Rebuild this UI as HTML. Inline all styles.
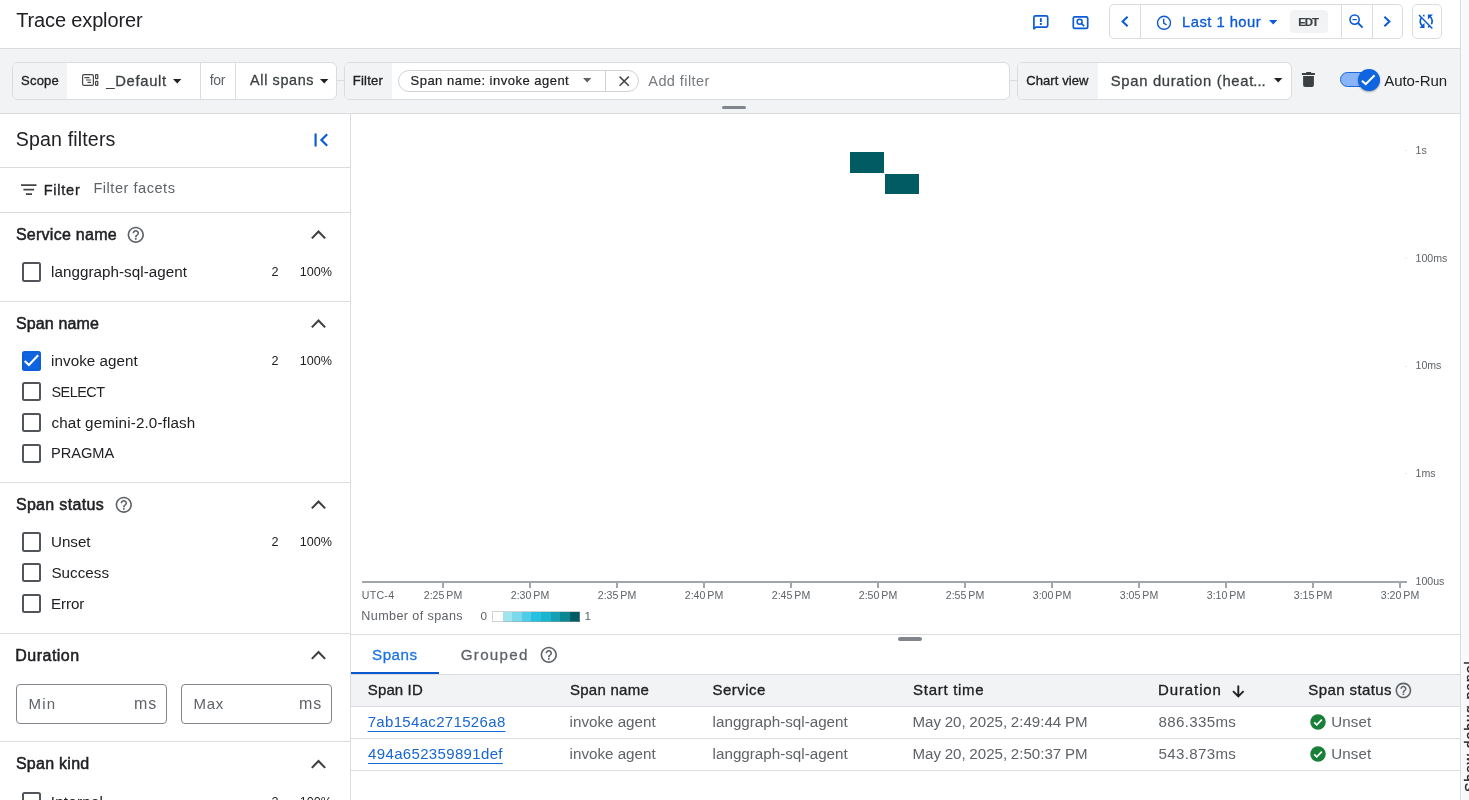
<!DOCTYPE html>
<html lang="en">
<head>
<meta charset="utf-8">
<title>Trace explorer</title>
<style>
*{box-sizing:border-box;margin:0;padding:0}
html,body{width:1469px;height:800px;overflow:hidden;background:#fff}
body{font-family:"Liberation Sans",sans-serif;color:#202124;position:relative}
.abs{position:absolute}
.t{position:absolute;white-space:pre;line-height:1}
.hl{position:absolute;height:1px;background:#dadce0}
.vl{position:absolute;width:1px;background:#dadce0}
.m{-webkit-text-stroke:0.5px currentColor}
.m2{-webkit-text-stroke:0.32px currentColor}
.s1{-webkit-text-stroke:0.28px currentColor}
.m3{-webkit-text-stroke:0.2px currentColor}
.blue{color:#0b5bd5}
.g{color:#5f6368}
.ax{color:#5f6368}
.tc{color:#5f6368}
.lk{color:#1967d2}
.d{color:#3c4043}
svg{position:absolute;overflow:visible}
.cb{position:absolute;width:18.6px;height:19.4px;border:2px solid #51555b;border-radius:2.5px;background:#fff}
.cb.on{background:#0e65df;border-color:#0b5fd8}
</style>
</head>
<body>
<div id="app" style="position:absolute;left:0;top:0;width:1469px;height:800px;will-change:transform">
<!-- header -->
<div class="hl" style="left:0px;top:48px;width:1460px"></div>
<div class="t " style="left:16.20px;top:10px;font-size:20px;letter-spacing:-0.14px;">Trace explorer</div>
<svg style="left:1033px;top:15px" width="16" height="15" viewBox="0 0 16 15"><path d="M0.9 13.8V2.4Q0.9 0.9 2.4 0.9H13.2Q14.7 0.9 14.7 2.4V10.6Q14.7 12.1 13.2 12.1H3Z" fill="none" stroke="#0b5bd5" stroke-width="1.7" stroke-linejoin="round"/><rect x="6.9" y="3.2" width="1.9" height="3.8" fill="#0b5bd5"/><rect x="6.9" y="8" width="1.9" height="1.9" fill="#0b5bd5"/></svg>
<svg style="left:1072px;top:16px" width="17" height="13" viewBox="0 0 17 13"><rect x="1.3" y="0.9" width="14.4" height="11.4" rx="1.4" fill="none" stroke="#0b5bd5" stroke-width="1.7"/><circle cx="7.6" cy="5.8" r="2.5" fill="none" stroke="#0b5bd5" stroke-width="1.5"/><path d="M9.4 7.6L12.2 10.2" stroke="#0b5bd5" stroke-width="1.6"/></svg>
<div class="abs" style="left:1109px;top:4px;width:294px;height:35px;border:1px solid #dadce0;border-radius:5px;background:#fff"></div>
<div class="vl" style="left:1140px;top:5px;height:33px"></div>
<div class="vl" style="left:1341px;top:5px;height:33px"></div>
<div class="vl" style="left:1372px;top:5px;height:33px"></div>
<svg style="left:1121px;top:16px" width="8" height="11" viewBox="0 0 8 11"><path d="M6.6 0.8L1.6 5.5L6.6 10.2" fill="none" stroke="#0b5bd5" stroke-width="2"/></svg>
<svg style="left:1156px;top:15px" width="16" height="16" viewBox="0 0 16 16"><circle cx="8" cy="7.8" r="6.5" fill="none" stroke="#0b5bd5" stroke-width="1.4"/><path d="M7.7 3.8V8L10.6 9.8" fill="none" stroke="#0b5bd5" stroke-width="1.4"/></svg>
<div class="t blue m2" style="left:1182.12px;top:15px;font-size:14.8px;letter-spacing:0.45px;">Last 1 hour</div>
<svg style="left:1269.40px;top:20.10px" width="8.4" height="4.4" viewBox="0 0 8.4 4.4"><path d="M0 0h8.4L4.2 4.4z" fill="#0b5bd5"/></svg>
<div class="abs" style="left:1290px;top:10px;width:38px;height:23px;border-radius:4px;background:#f1f3f4"></div>
<div class="t m3" style="left:1298.36px;top:17px;font-size:11.4px;letter-spacing:-1.12px;color:#3c4043;font-weight:700">EDT</div>
<svg style="left:1348px;top:13px" width="16" height="16" viewBox="0 0 16 16"><circle cx="6.6" cy="6.6" r="4.6" fill="none" stroke="#0b5bd5" stroke-width="1.6"/><path d="M10 10L14.6 14.6" stroke="#0b5bd5" stroke-width="1.8"/><path d="M4.4 6.6h4.4" stroke="#0b5bd5" stroke-width="1.2"/></svg>
<svg style="left:1383.2px;top:16px" width="8" height="11" viewBox="0 0 8 11"><path d="M1.4 0.8L6.4 5.5L1.4 10.2" fill="none" stroke="#0b5bd5" stroke-width="2"/></svg>
<div class="abs" style="left:1412px;top:4px;width:30px;height:35px;border:1px solid #dadce0;border-radius:5px;background:#fff"></div>
<svg style="left:1415.80px;top:11.00px" width="20.4" height="20.4" viewBox="0 0 24 24"><path d="M10 6.35V4.26c-.8.21-1.55.54-2.23.96l1.46 1.46c.25-.12.5-.24.77-.33zm-7.14-.94l2.36 2.36C4.45 8.99 4 10.44 4 12c0 2.21.91 4.2 2.36 5.64L4 20h6v-6l-2.24 2.24C6.68 15.15 6 13.66 6 12c0-1 .25-1.94.68-2.77l8.08 8.08c-.25.13-.5.25-.77.34v2.09c.8-.21 1.55-.54 2.23-.96l2.36 2.36 1.27-1.27L4.14 4.14 2.86 5.41zM20 4h-6v6l2.24-2.24C17.32 8.85 18 10.34 18 12c0 1-.25 1.94-.68 2.77l1.46 1.46C19.55 15.01 20 13.56 20 12c0-2.21-.91-4.2-2.36-5.64L20 4z" fill="#0b5bd5"/></svg>
<!-- toolbar -->
<div class="abs" style="left:0px;top:49px;width:1460px;height:64px;background:#f1f3f4"></div>
<div class="hl" style="left:0px;top:113px;width:1460px"></div>
<div class="abs" style="left:12px;top:62px;width:325px;height:38px;border:1px solid #dadce0;border-radius:6px;background:#fff;overflow:hidden">
  <div class="abs" style="left:0;top:0;width:54px;height:36px;background:#f1f3f4"></div>
  <div class="abs" style="left:187px;top:0;width:1px;height:36px;background:#dadce0"></div>
  <div class="abs" style="left:222px;top:0;width:1px;height:36px;background:#dadce0"></div>
</div>
<div class="t m2" style="left:21.11px;top:74px;font-size:13px;letter-spacing:0.19px;">Scope</div>
<svg style="left:82px;top:74px" width="17" height="12" viewBox="0 0 17 12" fill="none" stroke="#444746" stroke-width="1.2">
  <rect x="0.6" y="0.6" width="10.8" height="10.8" rx="1.5"/>
  <path d="M2.5 3.6h5M4 6h5M5.5 8.4h3.5" stroke-width="1.1"/>
  <rect x="13.6" y="0.6" width="2.2" height="4" rx="0.6"/>
  <rect x="13.6" y="7.4" width="2.2" height="4" rx="0.6"/>
</svg>
<div class="t d s1" style="left:106.32px;top:74px;font-size:14.8px;letter-spacing:0.67px;">_Default</div>
<svg style="left:172.80px;top:78.60px" width="8.4" height="4.4" viewBox="0 0 8.4 4.4"><path d="M0 0h8.4L4.2 4.4z" fill="#202124"/></svg>
<div class="t g" style="left:209.66px;top:73px;font-size:14px;letter-spacing:-0.27px;">for</div>
<div class="t d s1" style="left:250.10px;top:73px;font-size:14.4px;letter-spacing:0.62px;">All spans</div>
<svg style="left:319.50px;top:78.60px" width="8.4" height="4.4" viewBox="0 0 8.4 4.4"><path d="M0 0h8.4L4.2 4.4z" fill="#202124"/></svg>
<div class="hl" style="left:337px;top:80px;width:8px"></div>
<div class="abs" style="left:344px;top:62px;width:666px;height:38px;border:1px solid #dadce0;border-radius:6px;background:#fff;overflow:hidden">
  <div class="abs" style="left:0;top:0;width:47px;height:36px;background:#f1f3f4"></div>
</div>
<div class="t m2" style="left:352.76px;top:74px;font-size:13px;letter-spacing:0.26px;">Filter</div>
<div class="abs" style="left:398px;top:70px;width:241px;height:22px;border:1px solid #d0d3d7;border-radius:11px;background:#fff"></div>
<div class="vl" style="left:605px;top:71px;height:20px;background:#d0d3d7"></div>
<div class="t m3" style="left:410.52px;top:74px;font-size:13px;letter-spacing:0.49px;">Span name: invoke agent</div>
<svg style="left:583.40px;top:78.40px" width="8.4" height="4.4" viewBox="0 0 8.4 4.4"><path d="M0 0h8.4L4.2 4.4z" fill="#5f6368"/></svg>
<svg style="left:619.3px;top:75.5px" width="10.4" height="10.4" viewBox="0 0 10.4 10.4"><path d="M0.6 0.6l9.2 9.2M9.8 0.6l-9.2 9.2" stroke="#444746" stroke-width="1.5" fill="none"/></svg>
<div class="t " style="left:648.30px;top:74px;font-size:14.5px;letter-spacing:0.42px;color:#757a7f">Add filter</div>
<div class="abs" style="left:722px;top:106px;width:24.4px;height:3.4px;border-radius:2px;background:#80868b"></div>
<div class="hl" style="left:1010px;top:80px;width:8px"></div>
<div class="abs" style="left:1017px;top:62px;width:275px;height:38px;border:1px solid #dadce0;border-radius:6px;background:#fff;overflow:hidden">
  <div class="abs" style="left:0;top:0;width:80px;height:36px;background:#f1f3f4"></div>
</div>
<div class="t m2" style="left:1026.15px;top:74px;font-size:13px;letter-spacing:0.10px;">Chart view</div>
<div class="t d s1" style="left:1110.73px;top:74px;font-size:14.8px;letter-spacing:0.70px">Span duration (heat<span style="letter-spacing:0.05px;margin-left:-0.77px">...</span></div>
<svg style="left:1274.00px;top:78.30px" width="8.4" height="4.4" viewBox="0 0 8.4 4.4"><path d="M0 0h8.4L4.2 4.4z" fill="#202124"/></svg>
<svg style="left:1301px;top:71px" width="15" height="17" viewBox="0 0 15 17"><path d="M0.9 1.9h4.3V1h4.9v0.9h3.8v2.2H0.9z M2.1 5.05h10.8v8.9a2 2 0 0 1-2 2H4.1a2 2 0 0 1-2-2z" fill="#3c4043"/></svg>
<div class="abs" style="left:1340px;top:72px;width:39px;height:14.5px;border-radius:7.5px;background:#8ab4f8;border:1.2px solid #1a66dd"></div>
<div class="abs" style="left:1358px;top:68.8px;width:21.8px;height:21.8px;border-radius:11px;background:#0e65df;box-shadow:0 1px 2px rgba(0,0,0,.35)"></div>
<svg style="left:1358px;top:69px" width="22" height="22" viewBox="0 0 22 22"><path d="M3.9 11.7L7.7 15.1L16.6 6.2" stroke="#fff" stroke-width="2" fill="none"/></svg>
<div class="t " style="left:1384.30px;top:73px;font-size:15px;letter-spacing:-0.07px;">Auto-Run</div>
<!-- sidebar -->
<div class="vl" style="left:350px;top:114px;height:686px"></div>
<div class="t " style="left:15.72px;top:130px;font-size:19.6px;letter-spacing:0.15px;">Span filters</div>
<svg style="left:308.30px;top:127.40px" width="26" height="26" viewBox="0 0 24 24"><path d="M18.41 16.59L13.82 12l4.59-4.59L17 6l-6 6 6 6zM6 6h2v12H6z" fill="#0b5bd5"/></svg>
<div class="hl" style="left:0px;top:167px;width:350px"></div>
<svg style="left:21px;top:184px" width="16" height="11" viewBox="0 0 16 11"><path d="M0 1.1h15.5M2.4 5.7h10.7M4.9 10.2h6.1" stroke="#444746" stroke-width="1.7" fill="none"/></svg>
<div class="t m2" style="left:43.73px;top:183px;font-size:14.6px;letter-spacing:0.72px;">Filter</div>
<div class="t g" style="left:93.43px;top:181px;font-size:14.6px;letter-spacing:0.51px;">Filter facets</div>
<div class="hl" style="left:0px;top:212px;width:350px"></div>
<div class="t m" style="left:15.88px;top:227px;font-size:16px;letter-spacing:0.27px;">Service name</div>
<svg style="left:0;top:0" width="1" height="1"><path d="M311.84 238.36L318.5 231.50L325.16 238.36" stroke="#3c4043" stroke-width="2.1" fill="none"/></svg>
<svg style="left:126.00px;top:225.00px" width="19.6" height="19.6" viewBox="0 0 24 24"><path d="M11 18h2v-2h-2v2zm1-16C6.48 2 2 6.48 2 12s4.48 10 10 10 10-4.48 10-10S17.52 2 12 2zm0 18c-4.41 0-8-3.59-8-8s3.59-8 8-8 8 3.59 8 8-3.59 8-8 8zm0-14c-2.21 0-4 1.79-4 4h2c0-1.1.9-2 2-2s2 .9 2 2c0 2-3 1.75-3 5h2c0-2.25 3-2.5 3-5 0-2.21-1.79-4-4-4z" fill="#5f6368"/></svg>
<div class="cb" style="left:22.2px;top:262.30px"></div>
<div class="t " style="left:51.11px;top:264px;font-size:15.2px;letter-spacing:0.04px;">langgraph-sql-agent</div>
<div class="t " style="left:271.57px;top:266px;font-size:12.6px;">2</div>
<div class="t " style="left:299.66px;top:266px;font-size:12.6px;">100%</div>
<div class="hl" style="left:0px;top:301px;width:350px"></div>
<div class="t m" style="left:15.88px;top:316px;font-size:16px;letter-spacing:0.15px;">Span name</div>
<svg style="left:0;top:0" width="1" height="1"><path d="M311.84 327.36L318.5 320.50L325.16 327.36" stroke="#3c4043" stroke-width="2.1" fill="none"/></svg>
<div class="cb on" style="left:22.2px;top:351.30px"></div>
<svg style="left:22.2px;top:351.30px" width="18.6" height="19.4" viewBox="0 0 18.6 19.4"><path d="M2.7 10l4.2 4.1L16.2 4.3" stroke="#fff" stroke-width="2.1" fill="none"/></svg>
<div class="t " style="left:51.11px;top:353px;font-size:15.2px;letter-spacing:0.05px;">invoke agent</div>
<div class="t " style="left:271.57px;top:355px;font-size:12.6px;">2</div>
<div class="t " style="left:299.66px;top:355px;font-size:12.6px;">100%</div>
<div class="cb" style="left:22.2px;top:382.05px"></div>
<div class="t " style="left:51.45px;top:385px;font-size:14.4px;letter-spacing:-0.48px;">SELECT</div>
<div class="cb" style="left:22.2px;top:413.10px"></div>
<div class="t " style="left:51.49px;top:415px;font-size:15.2px;letter-spacing:0.14px;">chat gemini-2.0-flash</div>
<div class="cb" style="left:22.2px;top:443.70px"></div>
<div class="t " style="left:50.93px;top:446px;font-size:14.6px;letter-spacing:-0.01px;">PRAGMA</div>
<div class="hl" style="left:0px;top:482px;width:350px"></div>
<div class="t m" style="left:15.88px;top:497px;font-size:16px;letter-spacing:0.33px;">Span status</div>
<svg style="left:0;top:0" width="1" height="1"><path d="M311.84 508.36L318.5 501.50L325.16 508.36" stroke="#3c4043" stroke-width="2.1" fill="none"/></svg>
<svg style="left:113.70px;top:495.00px" width="19.6" height="19.6" viewBox="0 0 24 24"><path d="M11 18h2v-2h-2v2zm1-16C6.48 2 2 6.48 2 12s4.48 10 10 10 10-4.48 10-10S17.52 2 12 2zm0 18c-4.41 0-8-3.59-8-8s3.59-8 8-8 8 3.59 8 8-3.59 8-8 8zm0-14c-2.21 0-4 1.79-4 4h2c0-1.1.9-2 2-2s2 .9 2 2c0 2-3 1.75-3 5h2c0-2.25 3-2.5 3-5 0-2.21-1.79-4-4-4z" fill="#5f6368"/></svg>
<div class="cb" style="left:22.2px;top:532.30px"></div>
<div class="t " style="left:50.96px;top:534px;font-size:15.2px;letter-spacing:-0.01px;">Unset</div>
<div class="t " style="left:271.57px;top:536px;font-size:12.6px;">2</div>
<div class="t " style="left:299.66px;top:536px;font-size:12.6px;">100%</div>
<div class="cb" style="left:22.2px;top:563.05px"></div>
<div class="t " style="left:51.42px;top:565px;font-size:15.2px;letter-spacing:0.03px;">Success</div>
<div class="cb" style="left:22.2px;top:594.10px"></div>
<div class="t " style="left:50.88px;top:596px;font-size:15.2px;letter-spacing:-0.07px;">Error</div>
<div class="hl" style="left:0px;top:633px;width:350px"></div>
<div class="t m" style="left:15.32px;top:648px;font-size:16px;letter-spacing:0.48px;">Duration</div>
<svg style="left:0;top:0" width="1" height="1"><path d="M311.84 658.86L318.5 652.00L325.16 658.86" stroke="#3c4043" stroke-width="2.1" fill="none"/></svg>
<div class="abs" style="left:16px;top:684px;width:151px;height:40px;border:1px solid #80868b;border-radius:4px"></div>
<div class="abs" style="left:181px;top:684px;width:151px;height:40px;border:1px solid #80868b;border-radius:4px"></div>
<div class="t g" style="left:28.50px;top:696px;font-size:15px;letter-spacing:1.23px;">Min</div>
<div class="t g" style="left:133.96px;top:696px;font-size:16px;letter-spacing:0.94px;">ms</div>
<div class="t g" style="left:193.40px;top:696px;font-size:15px;letter-spacing:0.75px;">Max</div>
<div class="t g" style="left:298.96px;top:696px;font-size:16px;letter-spacing:0.94px;">ms</div>
<div class="hl" style="left:0px;top:741px;width:350px"></div>
<div class="t m" style="left:15.88px;top:756px;font-size:16px;letter-spacing:0.27px;">Span kind</div>
<svg style="left:0;top:0" width="1" height="1"><path d="M311.84 767.86L318.5 761.00L325.16 767.86" stroke="#3c4043" stroke-width="2.1" fill="none"/></svg>
<div class="cb" style="left:22.2px;top:792.30px"></div>
<div class="t " style="left:50.73px;top:794px;font-size:15.2px;letter-spacing:0.22px;">Internal</div>
<div class="t " style="left:271.57px;top:796px;font-size:12.6px;">2</div>
<div class="t " style="left:299.66px;top:796px;font-size:12.6px;">100%</div>
<!-- right strip -->
<div class="abs" style="left:1460px;top:0px;width:9px;height:800px;background:#f8f9fa;border-left:1px solid #dadce0"></div>
<div class="t m2" style="left:1463.3px;top:791.63px;font-size:14px;letter-spacing:0.97px;transform-origin:0 0;transform:rotate(-90deg)">Show debug panel</div>
<!-- chart -->
<div class="abs" style="left:850px;top:152px;width:34px;height:20.5px;background:#005b62"></div>
<div class="abs" style="left:885px;top:173.5px;width:34px;height:20px;background:#005b62"></div>
<div class="t ax" style="left:1415.5px;top:145px;font-size:10.6px;">1s</div>
<div class="abs" style="left:1405px;top:150px;width:2px;height:1px;background:#e8eaed"></div>
<div class="t ax" style="left:1415.5px;top:253px;font-size:10.6px;">100ms</div>
<div class="abs" style="left:1405px;top:258px;width:2px;height:1px;background:#e8eaed"></div>
<div class="t ax" style="left:1415.5px;top:360px;font-size:10.6px;">10ms</div>
<div class="abs" style="left:1405px;top:365.5px;width:2px;height:1px;background:#e8eaed"></div>
<div class="t ax" style="left:1415.5px;top:468px;font-size:10.6px;">1ms</div>
<div class="abs" style="left:1405px;top:473px;width:2px;height:1px;background:#e8eaed"></div>
<div class="t ax" style="left:1415.5px;top:576px;font-size:10.6px;">100us</div>
<div class="abs" style="left:362px;top:581px;width:1045px;height:2px;background:#a1a6ac"></div>
<div class="abs" style="left:442px;top:583px;width:1.5px;height:5px;background:#a1a6ac"></div>
<div class="t ax" style="left:403px;width:80px;text-align:center;top:590px;font-size:10.6px;word-spacing:-1px">2:25 PM</div>
<div class="abs" style="left:529px;top:583px;width:1.5px;height:5px;background:#a1a6ac"></div>
<div class="t ax" style="left:490px;width:80px;text-align:center;top:590px;font-size:10.6px;word-spacing:-1px">2:30 PM</div>
<div class="abs" style="left:616px;top:583px;width:1.5px;height:5px;background:#a1a6ac"></div>
<div class="t ax" style="left:577px;width:80px;text-align:center;top:590px;font-size:10.6px;word-spacing:-1px">2:35 PM</div>
<div class="abs" style="left:703px;top:583px;width:1.5px;height:5px;background:#a1a6ac"></div>
<div class="t ax" style="left:664px;width:80px;text-align:center;top:590px;font-size:10.6px;word-spacing:-1px">2:40 PM</div>
<div class="abs" style="left:790px;top:583px;width:1.5px;height:5px;background:#a1a6ac"></div>
<div class="t ax" style="left:751px;width:80px;text-align:center;top:590px;font-size:10.6px;word-spacing:-1px">2:45 PM</div>
<div class="abs" style="left:877px;top:583px;width:1.5px;height:5px;background:#a1a6ac"></div>
<div class="t ax" style="left:838px;width:80px;text-align:center;top:590px;font-size:10.6px;word-spacing:-1px">2:50 PM</div>
<div class="abs" style="left:964px;top:583px;width:1.5px;height:5px;background:#a1a6ac"></div>
<div class="t ax" style="left:925px;width:80px;text-align:center;top:590px;font-size:10.6px;word-spacing:-1px">2:55 PM</div>
<div class="abs" style="left:1051px;top:583px;width:1.5px;height:5px;background:#a1a6ac"></div>
<div class="t ax" style="left:1012px;width:80px;text-align:center;top:590px;font-size:10.6px;word-spacing:-1px">3:00 PM</div>
<div class="abs" style="left:1138px;top:583px;width:1.5px;height:5px;background:#a1a6ac"></div>
<div class="t ax" style="left:1099px;width:80px;text-align:center;top:590px;font-size:10.6px;word-spacing:-1px">3:05 PM</div>
<div class="abs" style="left:1225px;top:583px;width:1.5px;height:5px;background:#a1a6ac"></div>
<div class="t ax" style="left:1186px;width:80px;text-align:center;top:590px;font-size:10.6px;word-spacing:-1px">3:10 PM</div>
<div class="abs" style="left:1312px;top:583px;width:1.5px;height:5px;background:#a1a6ac"></div>
<div class="t ax" style="left:1273px;width:80px;text-align:center;top:590px;font-size:10.6px;word-spacing:-1px">3:15 PM</div>
<div class="abs" style="left:1399px;top:583px;width:1.5px;height:5px;background:#a1a6ac"></div>
<div class="t ax" style="left:1360px;width:80px;text-align:center;top:590px;font-size:10.6px;word-spacing:-1px">3:20 PM</div>
<div class="t ax" style="left:361.70px;top:590px;font-size:10.6px;letter-spacing:0.29px;">UTC-4</div>
<div class="t g" style="left:361.29px;top:610px;font-size:12.6px;letter-spacing:0.39px;">Number of spans</div>
<div class="t g" style="left:480.39px;top:610px;font-size:11.7px;">0</div>
<div class="t g" style="left:584.42px;top:610px;font-size:11.7px;">1</div>
<div class="abs" style="left:492.1px;top:611.5px;width:11.199999999999978px;height:10px;background:#ffffff"></div>
<div class="abs" style="left:503px;top:611.5px;width:9.3px;height:10px;background:#a0e4f0"></div>
<div class="abs" style="left:512px;top:611.5px;width:10.3px;height:10px;background:#7cd9ec"></div>
<div class="abs" style="left:522px;top:611.5px;width:9.400000000000023px;height:10px;background:#50cde6"></div>
<div class="abs" style="left:531.1px;top:611.5px;width:10.3px;height:10px;background:#26c0e0"></div>
<div class="abs" style="left:541.1px;top:611.5px;width:10.199999999999978px;height:10px;background:#19b5cf"></div>
<div class="abs" style="left:551px;top:611.5px;width:9.3px;height:10px;background:#149fb2"></div>
<div class="abs" style="left:560px;top:611.5px;width:10.3px;height:10px;background:#0b8693"></div>
<div class="abs" style="left:570px;top:611.5px;width:10.000000000000046px;height:10px;background:#005b62"></div>
<div class="abs" style="left:492px;top:611.2px;width:88px;height:10.6px;border:1px solid rgba(154,160,166,.45)"></div>
<div class="hl" style="left:351px;top:634px;width:1109px"></div>
<div class="abs" style="left:898px;top:637px;width:24px;height:4px;border-radius:2px;background:#80868b"></div>
<!-- table -->
<div class="t s1" style="left:372.02px;top:647px;font-size:15.2px;letter-spacing:0.48px;color:#1a73e8">Spans</div>
<div class="abs" style="left:351px;top:671.7px;width:88px;height:2.4px;background:#0b57d0"></div>
<div class="t g s1" style="left:460.74px;top:647px;font-size:15.2px;letter-spacing:1.26px;">Grouped</div>
<svg style="left:539.00px;top:644.50px" width="19.6" height="19.6" viewBox="0 0 24 24"><path d="M11 18h2v-2h-2v2zm1-16C6.48 2 2 6.48 2 12s4.48 10 10 10 10-4.48 10-10S17.52 2 12 2zm0 18c-4.41 0-8-3.59-8-8s3.59-8 8-8 8 3.59 8 8-3.59 8-8 8zm0-14c-2.21 0-4 1.79-4 4h2c0-1.1.9-2 2-2s2 .9 2 2c0 2-3 1.75-3 5h2c0-2.25 3-2.5 3-5 0-2.21-1.79-4-4-4z" fill="#5f6368"/></svg>
<div class="abs" style="left:351px;top:674px;width:1109px;height:33px;background:#f1f3f4;border-top:1px solid #dadce0;border-bottom:1px solid #dadce0"></div>
<div class="t m2" style="left:367.82px;top:682px;font-size:15px;letter-spacing:0.12px;">Span ID</div>
<div class="t m2" style="left:569.93px;top:682px;font-size:15px;letter-spacing:0.27px;">Span name</div>
<div class="t m2" style="left:712.53px;top:682px;font-size:15px;letter-spacing:0.47px;">Service</div>
<div class="t m2" style="left:913.03px;top:682px;font-size:15px;letter-spacing:0.72px;">Start time</div>
<div class="t m2" style="left:1158.00px;top:682px;font-size:15px;letter-spacing:0.89px;">Duration</div>
<svg style="left:1231.7px;top:684.6px" width="12.6" height="12.8" viewBox="0 0 12.6 12.8"><path d="M6.3 0.4V11.2M1 6.2L6.3 11.5L11.6 6.2" stroke="#202124" stroke-width="1.9" fill="none"/></svg>
<div class="t m2" style="left:1308.23px;top:682px;font-size:15px;letter-spacing:0.41px;">Span status</div>
<svg style="left:1394.10px;top:681.40px" width="18.8" height="18.8" viewBox="0 0 24 24"><path d="M11 18h2v-2h-2v2zm1-16C6.48 2 2 6.48 2 12s4.48 10 10 10 10-4.48 10-10S17.52 2 12 2zm0 18c-4.41 0-8-3.59-8-8s3.59-8 8-8 8 3.59 8 8-3.59 8-8 8zm0-14c-2.21 0-4 1.79-4 4h2c0-1.1.9-2 2-2s2 .9 2 2c0 2-3 1.75-3 5h2c0-2.25 3-2.5 3-5 0-2.21-1.79-4-4-4z" fill="#5f6368"/></svg>
<div class="t lk" style="left:367.65px;top:714px;font-size:15px;letter-spacing:0.33px;text-decoration:underline;text-decoration-thickness:1.2px;text-underline-offset:4px">7ab154ac271526a8</div>
<div class="t tc" style="left:569.61px;top:714px;font-size:15.2px;letter-spacing:-0.01px;">invoke agent</div>
<div class="t tc" style="left:712.61px;top:714px;font-size:15.2px;">langgraph-sql-agent</div>
<div class="t tc" style="left:912.49px;top:714px;font-size:15.1px;word-spacing:-0.50px;">May 20, 2025, 2:49:44 PM</div>
<div class="t tc" style="left:1158.60px;top:714px;font-size:15.1px;letter-spacing:0.32px;">886.335ms</div>
<svg style="left:1309.70px;top:714.20px" width="16" height="16" viewBox="0 0 16 16"><circle cx="8" cy="8" r="7.75" fill="#188038"/><path d="M4.2 8.3l2.6 2.6l5-5.2" stroke="#fff" stroke-width="1.7" fill="none"/></svg>
<div class="t tc" style="left:1331.27px;top:714px;font-size:15.1px;letter-spacing:0.15px;">Unset</div>
<div class="hl" style="left:351px;top:738px;width:1109px"></div>
<div class="t lk" style="left:368.10px;top:746px;font-size:15px;letter-spacing:0.34px;text-decoration:underline;text-decoration-thickness:1.2px;text-underline-offset:4px">494a652359891def</div>
<div class="t tc" style="left:569.61px;top:746px;font-size:15.2px;letter-spacing:-0.01px;">invoke agent</div>
<div class="t tc" style="left:712.61px;top:746px;font-size:15.2px;">langgraph-sql-agent</div>
<div class="t tc" style="left:912.49px;top:746px;font-size:15.1px;word-spacing:-0.50px;">May 20, 2025, 2:50:37 PM</div>
<div class="t tc" style="left:1158.60px;top:746px;font-size:15.1px;letter-spacing:0.32px;">543.873ms</div>
<svg style="left:1309.70px;top:746.20px" width="16" height="16" viewBox="0 0 16 16"><circle cx="8" cy="8" r="7.75" fill="#188038"/><path d="M4.2 8.3l2.6 2.6l5-5.2" stroke="#fff" stroke-width="1.7" fill="none"/></svg>
<div class="t tc" style="left:1331.27px;top:746px;font-size:15.1px;letter-spacing:0.15px;">Unset</div>
<div class="hl" style="left:351px;top:770px;width:1109px"></div>
</div>
</body>
</html>
